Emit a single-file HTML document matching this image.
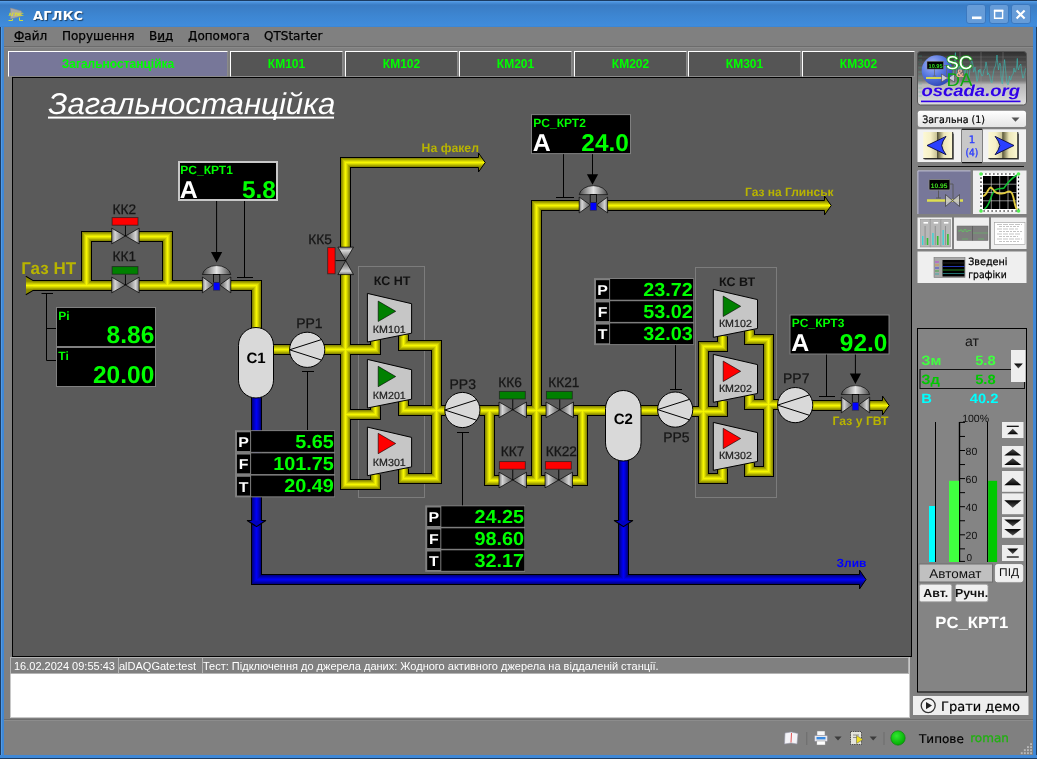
<!DOCTYPE html>
<html lang="uk"><head><meta charset="utf-8"><title>АГЛКС</title>
<style>
html,body{margin:0;padding:0;}
body{width:1037px;height:759px;position:relative;overflow:hidden;background:#808080;font-family:"Liberation Sans",sans-serif;}
.abs{position:absolute;box-sizing:border-box;}
#ttl,#menubar,.tab,.cell{will-change:transform;}
.dj{font-family:"DejaVu Sans","Liberation Sans",sans-serif;}
#titlebar{left:0;top:0;width:1037px;height:27px;background:linear-gradient(#1c3c62 0,#1c3c62 1px,#5ca2ea 1px,#4a90da 2.5px,#3a7cc4 5px,#3d86d2 16px,#408cdc 26px,#3a82d0 27px);}
#bl{left:0;top:27px;width:4px;height:732px;background:linear-gradient(90deg,#1c3c62 0,#1c3c62 1px,#5ca2ea 1px,#4a94e0 2px,#3f88d6 2px);}
#br{left:1033px;top:27px;width:4px;height:732px;background:linear-gradient(90deg,#3f88d6 0,#3f88d6 3px,#1c3c62 3px);}
#bb{left:0;top:755px;width:1037px;height:4px;background:linear-gradient(#3f88d6 0,#3f88d6 3px,#1c3c62 3px);}
#ttl{left:32.5px;top:7.5px;font:bold 13px "DejaVu Sans",sans-serif;color:#fff;text-shadow:1px 1px 1px rgba(0,0,0,.55);letter-spacing:.2px;}
.wb{top:4px;width:20px;height:20px;border-radius:3px;background:#669cd8;border:1px solid #3b78bf;}
#menubar{left:4px;top:27px;width:1029px;height:19px;background:#808080;}
#menubar span{position:absolute;top:2px;font:12px "DejaVu Sans",sans-serif;color:#000;-webkit-text-stroke:0.25px #000;}
#msep{left:4px;top:46px;width:1029px;height:2px;background:linear-gradient(#6c6c6c 0,#6c6c6c 1px,#8a8a8a 1px);}
.tab{top:51px;height:26px;background:#555;border:1px solid;border-color:#fff #8a8a8a #8a8a8a #fff;color:#00ff00;font:bold 12px "Liberation Sans",sans-serif;text-align:center;line-height:24px;}
.tab.act{background:#777799;}
#canvas{left:12px;top:77px;width:900px;height:580px;background:#5a5a5a;border:1px solid #000;}
#stbl{left:10px;top:657px;width:900px;height:61px;background:#fff;border:1px solid #c8c8c8;border-top:none;}
#strow{left:10px;top:657px;width:899px;height:17px;background:#808080;}
.cell{top:657px;height:17px;border:1px solid #b4b4b4;color:#fff;font:11px "Liberation Sans",sans-serif;line-height:16px;white-space:nowrap;overflow:hidden;}
#sline{left:4px;top:719px;width:1029px;height:2px;background:linear-gradient(#6e6e6e 0,#6e6e6e 1px,#8c8c8c 1px);}
.pbtn{background:#eeeeee;border:1px solid;border-color:#fff #b8b8b8 #b8b8b8 #fff;}
</style></head><body>
<div class="abs" id="titlebar"></div>
<div class="abs" id="bl"></div><div class="abs" id="br"></div><div class="abs" id="bb"></div>
<div class="abs" id="ttl">АГЛКС</div>
<div class="abs wb" style="left:966px"></div><div class="abs wb" style="left:989px"></div><div class="abs wb" style="left:1011px"></div>
<div class="abs" id="menubar"><span style="left:10px"><u>Ф</u>айл</span><span style="left:58px">Порушення</span><span style="left:145px">В<u>и</u>д</span><span style="left:184px"><u>Д</u>опомога</span><span style="left:260px">QTStarter</span></div>
<div class="abs" id="msep"></div>
<div class="abs tab act" style="left:8px;width:220px">Загальностанційка</div>
<div class="abs tab" style="left:230px;width:113px">КМ101</div>
<div class="abs tab" style="left:345px;width:113px">КМ102</div>
<div class="abs tab" style="left:459px;width:113px">КМ201</div>
<div class="abs tab" style="left:574px;width:113px">КМ202</div>
<div class="abs tab" style="left:688px;width:113px">КМ301</div>
<div class="abs tab" style="left:802px;width:113px">КМ302</div>
<div class="abs" id="canvas"></div>
<div class="abs" id="stbl"></div><div class="abs" id="strow"></div>
<div class="abs cell" style="left:10px;width:109px;padding-left:3px">16.02.2024 09:55:43</div>
<div class="abs cell" style="left:118px;width:85px;padding-left:0px">alDAQGate:test</div>
<div class="abs cell" style="left:202px;width:707px;padding-left:0px">Тест: Підключення до джерела даних: Жодного активного джерела на віддаленій станції.</div>
<div class="abs" id="sline"></div>
<!--RIGHT-->
<svg width="1037" height="759" viewBox="0 0 1037 759" style="position:absolute;left:0;top:0;will-change:transform" font-family="Liberation Sans, sans-serif" text-rendering="geometricPrecision"><defs>
<linearGradient id="gvl" x1="0" x2="1" y1="0" y2="0"><stop offset="0" stop-color="#747474"/><stop offset="0.25" stop-color="#d6d6d6"/><stop offset="0.65" stop-color="#8e8e8e"/><stop offset="1" stop-color="#5a5a5a"/></linearGradient>
<linearGradient id="gvr" x1="0" x2="1" y1="0" y2="0"><stop offset="0" stop-color="#5a5a5a"/><stop offset="0.35" stop-color="#8e8e8e"/><stop offset="0.75" stop-color="#d6d6d6"/><stop offset="1" stop-color="#747474"/></linearGradient>
<linearGradient id="gvt" x1="0" x2="0" y1="0" y2="1"><stop offset="0" stop-color="#747474"/><stop offset="0.25" stop-color="#d6d6d6"/><stop offset="0.65" stop-color="#8e8e8e"/><stop offset="1" stop-color="#5a5a5a"/></linearGradient>
<linearGradient id="gvb" x1="0" x2="0" y1="0" y2="1"><stop offset="0" stop-color="#5a5a5a"/><stop offset="0.35" stop-color="#8e8e8e"/><stop offset="0.75" stop-color="#d6d6d6"/><stop offset="1" stop-color="#747474"/></linearGradient>
<linearGradient id="gdome" x1="0" x2="1" y1="0" y2="0"><stop offset="0" stop-color="#4a4a4a"/><stop offset="0.5" stop-color="#e4e4e4"/><stop offset="1" stop-color="#4a4a4a"/></linearGradient>
<linearGradient id="gyh" x1="0" x2="0" y1="0" y2="1"><stop offset="0" stop-color="#8c8c00"/><stop offset="0.27" stop-color="#8c8c00"/><stop offset="0.5" stop-color="#f6f600"/><stop offset="0.73" stop-color="#8c8c00"/><stop offset="1" stop-color="#8c8c00"/></linearGradient>
<linearGradient id="gbh" x1="0" x2="0" y1="0" y2="1"><stop offset="0" stop-color="#00008c"/><stop offset="0.27" stop-color="#00008c"/><stop offset="0.5" stop-color="#0000f6"/><stop offset="0.73" stop-color="#00008c"/><stop offset="1" stop-color="#00008c"/></linearGradient>
</defs>
<rect x="358.5" y="266.5" width="66" height="231" fill="none" stroke="#7c7c7c" stroke-width="1"/>
<rect x="695.5" y="267.5" width="81" height="230" fill="none" stroke="#7c7c7c" stroke-width="1"/>
<path d="M256.5,396 L256.5,579.5 L860.5,579.5 M623.5,459 L623.5,579.5" fill="none" stroke="#000000" stroke-width="11" stroke-linejoin="miter" stroke-linecap="butt"/>
<path d="M256.5,396 L256.5,579.5 L860.5,579.5 M623.5,459 L623.5,579.5" fill="none" stroke="#00008c" stroke-width="9" stroke-linejoin="miter" stroke-linecap="butt"/>
<path d="M256.5,396 L256.5,579.5 L860.5,579.5 M623.5,459 L623.5,579.5" fill="none" stroke="#0000a8" stroke-width="7" stroke-linejoin="miter" stroke-linecap="butt"/>
<path d="M256.5,396 L256.5,579.5 L860.5,579.5 M623.5,459 L623.5,579.5" fill="none" stroke="#0000c6" stroke-width="5" stroke-linejoin="miter" stroke-linecap="butt"/>
<path d="M256.5,396 L256.5,579.5 L860.5,579.5 M623.5,459 L623.5,579.5" fill="none" stroke="#0000e2" stroke-width="3" stroke-linejoin="miter" stroke-linecap="butt"/>
<path d="M256.5,396 L256.5,579.5 L860.5,579.5 M623.5,459 L623.5,579.5" fill="none" stroke="#0000f6" stroke-width="1" stroke-linejoin="miter" stroke-linecap="butt"/>
<polygon points="859.5,570 866,579.5 859.5,589" fill="url(#gbh)"/>
<path d="M859.5,574.5 V570 L866,579.5 L859.5,589 V584.5" fill="none" stroke="#000" stroke-width="1"/>
<polygon points="247.2,520.4 265.8,520.4 256.5,526.4" fill="#0000c4"/>
<rect x="252" y="519" width="9" height="8" fill="none"/>
<polygon points="614.2,520.4 632.8,520.4 623.5,526.4" fill="#0000c4"/>
<rect x="619" y="519" width="9" height="8" fill="none"/>
<path d="M246.9,520.5 H251.5 M261.5,520.5 H266.1 M247.2,520.5 L256.5,526.6 L265.8,520.5" fill="none" stroke="#000" stroke-width="1.1"/>
<path d="M613.9,520.5 H618.5 M628.5,520.5 H633.1 M614.2,520.5 L623.5,526.6 L632.8,520.5" fill="none" stroke="#000" stroke-width="1.1"/>
<path d="M33,285.5 L112,285.5 M139,285.5 L203.5,285.5 M230.5,285.5 L256.5,285.5 L256.5,329 M86.5,285.5 L86.5,236.5 L112,236.5 M139,236.5 L167.5,236.5 L167.5,285.5 M272,349.5 L290,349.5 M324,349.5 L345.5,349.5 M479.5,162.5 L345.5,162.5 L345.5,247.2 M345.5,274.6 L345.5,484.5 L375.5,484.5 L375.5,474.5 M345.5,349.5 L375.5,349.5 L375.5,339.8 M345.5,414.5 L375.5,414.5 L375.5,406.3 M403.5,334.6 L403.5,345.5 L436.5,345.5 L436.5,478.5 L403.5,478.5 L403.5,468.5 M403.5,400.3 L403.5,410.5 L445,410.5 M479.5,410.5 L499.5,410.5 M526.5,410.5 L546.5,410.5 M573.5,410.5 L606,410.5 M489.5,410.5 L489.5,480.5 L499.5,480.5 M526.5,480.5 L545.5,480.5 M572.5,480.5 L582.5,480.5 L582.5,410.5 M536.5,480.5 L536.5,205.5 L579.5,205.5 M607.5,205.5 L825.5,205.5 M640,410.5 L658,410.5 M692,411.5 L703.5,411.5 M722.5,336.3 L722.5,346.5 L703.5,346.5 L703.5,478.5 L722.5,478.5 L722.5,468.5 M703.5,411.5 L722.5,411.5 L722.5,401.3 M749.5,330.2 L749.5,339.5 L768.5,339.5 L768.5,471.5 L749.5,471.5 L749.5,462.8 M749.5,395.2 L749.5,404.5 L778,404.5 M812,405.5 L842.5,405.5 M869.5,405.5 L883.5,405.5" fill="none" stroke="#000000" stroke-width="11" stroke-linejoin="miter" stroke-linecap="butt"/>
<path d="M33,285.5 L112,285.5 M139,285.5 L203.5,285.5 M230.5,285.5 L256.5,285.5 L256.5,329 M86.5,285.5 L86.5,236.5 L112,236.5 M139,236.5 L167.5,236.5 L167.5,285.5 M272,349.5 L290,349.5 M324,349.5 L345.5,349.5 M479.5,162.5 L345.5,162.5 L345.5,247.2 M345.5,274.6 L345.5,484.5 L375.5,484.5 L375.5,474.5 M345.5,349.5 L375.5,349.5 L375.5,339.8 M345.5,414.5 L375.5,414.5 L375.5,406.3 M403.5,334.6 L403.5,345.5 L436.5,345.5 L436.5,478.5 L403.5,478.5 L403.5,468.5 M403.5,400.3 L403.5,410.5 L445,410.5 M479.5,410.5 L499.5,410.5 M526.5,410.5 L546.5,410.5 M573.5,410.5 L606,410.5 M489.5,410.5 L489.5,480.5 L499.5,480.5 M526.5,480.5 L545.5,480.5 M572.5,480.5 L582.5,480.5 L582.5,410.5 M536.5,480.5 L536.5,205.5 L579.5,205.5 M607.5,205.5 L825.5,205.5 M640,410.5 L658,410.5 M692,411.5 L703.5,411.5 M722.5,336.3 L722.5,346.5 L703.5,346.5 L703.5,478.5 L722.5,478.5 L722.5,468.5 M703.5,411.5 L722.5,411.5 L722.5,401.3 M749.5,330.2 L749.5,339.5 L768.5,339.5 L768.5,471.5 L749.5,471.5 L749.5,462.8 M749.5,395.2 L749.5,404.5 L778,404.5 M812,405.5 L842.5,405.5 M869.5,405.5 L883.5,405.5" fill="none" stroke="#8c8c00" stroke-width="9" stroke-linejoin="miter" stroke-linecap="butt"/>
<path d="M33,285.5 L112,285.5 M139,285.5 L203.5,285.5 M230.5,285.5 L256.5,285.5 L256.5,329 M86.5,285.5 L86.5,236.5 L112,236.5 M139,236.5 L167.5,236.5 L167.5,285.5 M272,349.5 L290,349.5 M324,349.5 L345.5,349.5 M479.5,162.5 L345.5,162.5 L345.5,247.2 M345.5,274.6 L345.5,484.5 L375.5,484.5 L375.5,474.5 M345.5,349.5 L375.5,349.5 L375.5,339.8 M345.5,414.5 L375.5,414.5 L375.5,406.3 M403.5,334.6 L403.5,345.5 L436.5,345.5 L436.5,478.5 L403.5,478.5 L403.5,468.5 M403.5,400.3 L403.5,410.5 L445,410.5 M479.5,410.5 L499.5,410.5 M526.5,410.5 L546.5,410.5 M573.5,410.5 L606,410.5 M489.5,410.5 L489.5,480.5 L499.5,480.5 M526.5,480.5 L545.5,480.5 M572.5,480.5 L582.5,480.5 L582.5,410.5 M536.5,480.5 L536.5,205.5 L579.5,205.5 M607.5,205.5 L825.5,205.5 M640,410.5 L658,410.5 M692,411.5 L703.5,411.5 M722.5,336.3 L722.5,346.5 L703.5,346.5 L703.5,478.5 L722.5,478.5 L722.5,468.5 M703.5,411.5 L722.5,411.5 L722.5,401.3 M749.5,330.2 L749.5,339.5 L768.5,339.5 L768.5,471.5 L749.5,471.5 L749.5,462.8 M749.5,395.2 L749.5,404.5 L778,404.5 M812,405.5 L842.5,405.5 M869.5,405.5 L883.5,405.5" fill="none" stroke="#a8a800" stroke-width="7" stroke-linejoin="miter" stroke-linecap="butt"/>
<path d="M33,285.5 L112,285.5 M139,285.5 L203.5,285.5 M230.5,285.5 L256.5,285.5 L256.5,329 M86.5,285.5 L86.5,236.5 L112,236.5 M139,236.5 L167.5,236.5 L167.5,285.5 M272,349.5 L290,349.5 M324,349.5 L345.5,349.5 M479.5,162.5 L345.5,162.5 L345.5,247.2 M345.5,274.6 L345.5,484.5 L375.5,484.5 L375.5,474.5 M345.5,349.5 L375.5,349.5 L375.5,339.8 M345.5,414.5 L375.5,414.5 L375.5,406.3 M403.5,334.6 L403.5,345.5 L436.5,345.5 L436.5,478.5 L403.5,478.5 L403.5,468.5 M403.5,400.3 L403.5,410.5 L445,410.5 M479.5,410.5 L499.5,410.5 M526.5,410.5 L546.5,410.5 M573.5,410.5 L606,410.5 M489.5,410.5 L489.5,480.5 L499.5,480.5 M526.5,480.5 L545.5,480.5 M572.5,480.5 L582.5,480.5 L582.5,410.5 M536.5,480.5 L536.5,205.5 L579.5,205.5 M607.5,205.5 L825.5,205.5 M640,410.5 L658,410.5 M692,411.5 L703.5,411.5 M722.5,336.3 L722.5,346.5 L703.5,346.5 L703.5,478.5 L722.5,478.5 L722.5,468.5 M703.5,411.5 L722.5,411.5 L722.5,401.3 M749.5,330.2 L749.5,339.5 L768.5,339.5 L768.5,471.5 L749.5,471.5 L749.5,462.8 M749.5,395.2 L749.5,404.5 L778,404.5 M812,405.5 L842.5,405.5 M869.5,405.5 L883.5,405.5" fill="none" stroke="#c6c600" stroke-width="5" stroke-linejoin="miter" stroke-linecap="butt"/>
<path d="M33,285.5 L112,285.5 M139,285.5 L203.5,285.5 M230.5,285.5 L256.5,285.5 L256.5,329 M86.5,285.5 L86.5,236.5 L112,236.5 M139,236.5 L167.5,236.5 L167.5,285.5 M272,349.5 L290,349.5 M324,349.5 L345.5,349.5 M479.5,162.5 L345.5,162.5 L345.5,247.2 M345.5,274.6 L345.5,484.5 L375.5,484.5 L375.5,474.5 M345.5,349.5 L375.5,349.5 L375.5,339.8 M345.5,414.5 L375.5,414.5 L375.5,406.3 M403.5,334.6 L403.5,345.5 L436.5,345.5 L436.5,478.5 L403.5,478.5 L403.5,468.5 M403.5,400.3 L403.5,410.5 L445,410.5 M479.5,410.5 L499.5,410.5 M526.5,410.5 L546.5,410.5 M573.5,410.5 L606,410.5 M489.5,410.5 L489.5,480.5 L499.5,480.5 M526.5,480.5 L545.5,480.5 M572.5,480.5 L582.5,480.5 L582.5,410.5 M536.5,480.5 L536.5,205.5 L579.5,205.5 M607.5,205.5 L825.5,205.5 M640,410.5 L658,410.5 M692,411.5 L703.5,411.5 M722.5,336.3 L722.5,346.5 L703.5,346.5 L703.5,478.5 L722.5,478.5 L722.5,468.5 M703.5,411.5 L722.5,411.5 L722.5,401.3 M749.5,330.2 L749.5,339.5 L768.5,339.5 L768.5,471.5 L749.5,471.5 L749.5,462.8 M749.5,395.2 L749.5,404.5 L778,404.5 M812,405.5 L842.5,405.5 M869.5,405.5 L883.5,405.5" fill="none" stroke="#e2e200" stroke-width="3" stroke-linejoin="miter" stroke-linecap="butt"/>
<path d="M33,285.5 L112,285.5 M139,285.5 L203.5,285.5 M230.5,285.5 L256.5,285.5 L256.5,329 M86.5,285.5 L86.5,236.5 L112,236.5 M139,236.5 L167.5,236.5 L167.5,285.5 M272,349.5 L290,349.5 M324,349.5 L345.5,349.5 M479.5,162.5 L345.5,162.5 L345.5,247.2 M345.5,274.6 L345.5,484.5 L375.5,484.5 L375.5,474.5 M345.5,349.5 L375.5,349.5 L375.5,339.8 M345.5,414.5 L375.5,414.5 L375.5,406.3 M403.5,334.6 L403.5,345.5 L436.5,345.5 L436.5,478.5 L403.5,478.5 L403.5,468.5 M403.5,400.3 L403.5,410.5 L445,410.5 M479.5,410.5 L499.5,410.5 M526.5,410.5 L546.5,410.5 M573.5,410.5 L606,410.5 M489.5,410.5 L489.5,480.5 L499.5,480.5 M526.5,480.5 L545.5,480.5 M572.5,480.5 L582.5,480.5 L582.5,410.5 M536.5,480.5 L536.5,205.5 L579.5,205.5 M607.5,205.5 L825.5,205.5 M640,410.5 L658,410.5 M692,411.5 L703.5,411.5 M722.5,336.3 L722.5,346.5 L703.5,346.5 L703.5,478.5 L722.5,478.5 L722.5,468.5 M703.5,411.5 L722.5,411.5 L722.5,401.3 M749.5,330.2 L749.5,339.5 L768.5,339.5 L768.5,471.5 L749.5,471.5 L749.5,462.8 M749.5,395.2 L749.5,404.5 L778,404.5 M812,405.5 L842.5,405.5 M869.5,405.5 L883.5,405.5" fill="none" stroke="#f6f600" stroke-width="1" stroke-linejoin="miter" stroke-linecap="butt"/>
<polygon points="478.5,153 485.2,162.5 478.5,172" fill="url(#gyh)"/>
<path d="M478.5,157.5 V153 L485.2,162.5 L478.5,172 V167.5" fill="none" stroke="#000" stroke-width="1"/>
<polygon points="824.5,196 831.2,205.5 824.5,215" fill="url(#gyh)"/>
<path d="M824.5,200.5 V196 L831.2,205.5 L824.5,215 V210.5" fill="none" stroke="#000" stroke-width="1"/>
<polygon points="882.5,396 889.2,405.5 882.5,415" fill="url(#gyh)"/>
<path d="M882.5,400.5 V396 L889.2,405.5 L882.5,415 V410.5" fill="none" stroke="#000" stroke-width="1"/>
<polygon points="26,276 33.2,281 33.2,290 26,295" fill="url(#gyh)"/>
<path d="M25.8,276.2 L33.2,280.6 M25.8,294.8 L33.2,290.4" fill="none" stroke="#000" stroke-width="1.1"/>
<rect x="238.5" y="327.5" width="35" height="70.5" rx="17.5" ry="17.85" fill="#d9d9d9" stroke="#000" stroke-width="1"/>
<text x="256" y="362.7" font-size="15" fill="#000" font-weight="bold" text-anchor="middle"  >С1</text>
<rect x="605.5" y="390.5" width="35.5" height="70.5" rx="17.75" ry="18.105" fill="#d9d9d9" stroke="#000" stroke-width="1"/>
<text x="623.25" y="423.7" font-size="15" fill="#000" font-weight="bold" text-anchor="middle"  >С2</text>
<circle cx="307.2" cy="349.8" r="17.6" fill="#d9d9d9" stroke="#000" stroke-width="1"/>
<path d="M321.7,339.5 L289.6,349.8 L321.7,360.1" fill="none" stroke="#000" stroke-width="1"/>
<text x="296.2" y="328" font-size="14" fill="#161616" font-weight="normal" text-anchor="start"  stroke="#161616" stroke-width="0.25">PP1</text>
<circle cx="462.4" cy="410" r="17.6" fill="#d9d9d9" stroke="#000" stroke-width="1"/>
<path d="M476.9,399.7 L444.8,410 L476.9,420.3" fill="none" stroke="#000" stroke-width="1"/>
<text x="449.5" y="388.8" font-size="14" fill="#161616" font-weight="normal" text-anchor="start"  stroke="#161616" stroke-width="0.25">PP3</text>
<circle cx="675.2" cy="409.6" r="17.6" fill="#d9d9d9" stroke="#000" stroke-width="1"/>
<path d="M689.7,399.3 L657.6,409.6 L689.7,419.9" fill="none" stroke="#000" stroke-width="1"/>
<text x="663.2" y="442.3" font-size="14" fill="#161616" font-weight="normal" text-anchor="start"  stroke="#161616" stroke-width="0.25">PP5</text>
<circle cx="795.2" cy="405.1" r="17.6" fill="#d9d9d9" stroke="#000" stroke-width="1"/>
<path d="M809.7,394.8 L777.6,405.1 L809.7,415.4" fill="none" stroke="#000" stroke-width="1"/>
<text x="783" y="383" font-size="14" fill="#161616" font-weight="normal" text-anchor="start"  stroke="#161616" stroke-width="0.25">PP7</text>
<line x1="307.5" y1="371.5" x2="307.5" y2="430" stroke="#000" stroke-width="1"/>
<line x1="302" y1="371.5" x2="314" y2="371.5" stroke="#000" stroke-width="1"/>
<line x1="462.5" y1="432.5" x2="462.5" y2="506" stroke="#000" stroke-width="1"/>
<line x1="457" y1="432.5" x2="469" y2="432.5" stroke="#000" stroke-width="1"/>
<line x1="675.5" y1="344" x2="675.5" y2="389.5" stroke="#000" stroke-width="1"/>
<line x1="670" y1="389.5" x2="682" y2="389.5" stroke="#000" stroke-width="1"/>
<line x1="826.5" y1="354" x2="826.5" y2="396.5" stroke="#000" stroke-width="1"/>
<line x1="819" y1="396.5" x2="835" y2="396.5" stroke="#000" stroke-width="1"/>
<line x1="563.5" y1="154" x2="563.5" y2="197.5" stroke="#000" stroke-width="1"/>
<line x1="556" y1="197.5" x2="574" y2="197.5" stroke="#000" stroke-width="1"/>
<line x1="244.5" y1="201" x2="244.5" y2="277.5" stroke="#000" stroke-width="1"/>
<line x1="237" y1="277.5" x2="253" y2="277.5" stroke="#000" stroke-width="1"/>
<line x1="46.5" y1="293.5" x2="46.5" y2="360.5" stroke="#000" stroke-width="1"/>
<line x1="41.5" y1="293.5" x2="53" y2="293.5" stroke="#000" stroke-width="1"/>
<line x1="46.5" y1="328.5" x2="57" y2="328.5" stroke="#000" stroke-width="1"/>
<line x1="46.5" y1="360.5" x2="57" y2="360.5" stroke="#000" stroke-width="1"/>
<polygon points="111.7,228.2 125.45,236 111.7,243.8" fill="url(#gvl)" stroke="#000" stroke-width="0.7"/>
<polygon points="139.2,228.2 125.45,236 139.2,243.8" fill="url(#gvr)" stroke="#000" stroke-width="0.7"/>
<line x1="125.45" y1="236" x2="125.45" y2="225.5" stroke="#000" stroke-width="0.9"/>
<rect x="112.1" y="217.6" width="25.9" height="7.6" fill="#ff0000" stroke="#1a1a1a" stroke-opacity="0.7" stroke-width="0.9"/>
<text x="112.6" y="213.7" font-size="13.7" fill="#161616" font-weight="normal" text-anchor="start"  stroke="#161616" stroke-width="0.25">КК2</text>
<polygon points="111.7,277.2 125.45,285 111.7,292.8" fill="url(#gvl)" stroke="#000" stroke-width="0.7"/>
<polygon points="139.2,277.2 125.45,285 139.2,292.8" fill="url(#gvr)" stroke="#000" stroke-width="0.7"/>
<line x1="125.45" y1="285" x2="125.45" y2="274.5" stroke="#000" stroke-width="0.9"/>
<rect x="112.1" y="266.6" width="25.9" height="7.6" fill="#008000" stroke="#1a1a1a" stroke-opacity="0.7" stroke-width="0.9"/>
<text x="112.6" y="261.4" font-size="13.7" fill="#161616" font-weight="normal" text-anchor="start"  stroke="#161616" stroke-width="0.25">КК1</text>
<polygon points="499,402 512.75,409.8 499,417.6" fill="url(#gvl)" stroke="#000" stroke-width="0.7"/>
<polygon points="526.5,402 512.75,409.8 526.5,417.6" fill="url(#gvr)" stroke="#000" stroke-width="0.7"/>
<line x1="512.75" y1="409.8" x2="512.75" y2="399.3" stroke="#000" stroke-width="0.9"/>
<rect x="499.4" y="391.4" width="25.9" height="7.6" fill="#008000" stroke="#1a1a1a" stroke-opacity="0.7" stroke-width="0.9"/>
<text x="498.2" y="386.7" font-size="13.7" fill="#161616" font-weight="normal" text-anchor="start"  stroke="#161616" stroke-width="0.25">КК6</text>
<polygon points="546,402 559.75,409.8 546,417.6" fill="url(#gvl)" stroke="#000" stroke-width="0.7"/>
<polygon points="573.5,402 559.75,409.8 573.5,417.6" fill="url(#gvr)" stroke="#000" stroke-width="0.7"/>
<line x1="559.75" y1="409.8" x2="559.75" y2="399.3" stroke="#000" stroke-width="0.9"/>
<rect x="546.4" y="391.4" width="25.9" height="7.6" fill="#008000" stroke="#1a1a1a" stroke-opacity="0.7" stroke-width="0.9"/>
<text x="548.2" y="386.7" font-size="13.7" fill="#161616" font-weight="normal" text-anchor="start"  stroke="#161616" stroke-width="0.25">КК21</text>
<polygon points="499,472.2 512.75,480 499,487.8" fill="url(#gvl)" stroke="#000" stroke-width="0.7"/>
<polygon points="526.5,472.2 512.75,480 526.5,487.8" fill="url(#gvr)" stroke="#000" stroke-width="0.7"/>
<line x1="512.75" y1="480" x2="512.75" y2="469.5" stroke="#000" stroke-width="0.9"/>
<rect x="499.4" y="461.6" width="25.9" height="7.6" fill="#ff0000" stroke="#1a1a1a" stroke-opacity="0.7" stroke-width="0.9"/>
<text x="500.8" y="455.7" font-size="13.7" fill="#161616" font-weight="normal" text-anchor="start"  stroke="#161616" stroke-width="0.25">КК7</text>
<polygon points="545,472.2 558.75,480 545,487.8" fill="url(#gvl)" stroke="#000" stroke-width="0.7"/>
<polygon points="572.5,472.2 558.75,480 572.5,487.8" fill="url(#gvr)" stroke="#000" stroke-width="0.7"/>
<line x1="558.75" y1="480" x2="558.75" y2="469.5" stroke="#000" stroke-width="0.9"/>
<rect x="545.4" y="461.6" width="25.9" height="7.6" fill="#ff0000" stroke="#1a1a1a" stroke-opacity="0.7" stroke-width="0.9"/>
<text x="545.8" y="455.7" font-size="13.7" fill="#161616" font-weight="normal" text-anchor="start"  stroke="#161616" stroke-width="0.25">КК22</text>
<polygon points="337.9,247.1 345.7,260.6 353.5,247.1" fill="url(#gvt)" stroke="#000" stroke-width="0.7"/>
<polygon points="337.9,274.6 345.7,260.6 353.5,274.6" fill="url(#gvb)" stroke="#000" stroke-width="0.7"/>
<line x1="345.7" y1="260.6" x2="335.4" y2="260.6" stroke="#000" stroke-width="0.9"/>
<rect x="327.7" y="247.6" width="7.4" height="26.2" fill="#ff0000" stroke="#1a1a1a" stroke-opacity="0.7" stroke-width="0.9"/>
<text x="308.2" y="243.8" font-size="13.7" fill="#161616" font-weight="normal" text-anchor="start"  stroke="#161616" stroke-width="0.25">КК5</text>
<polygon points="202.4,277 213.6,284.9 202.4,292.8" fill="url(#gvl)" stroke="#000" stroke-width="0.7"/>
<polygon points="230.8,277 219.6,284.9 230.8,292.8" fill="url(#gvr)" stroke="#000" stroke-width="0.7"/>
<path d="M202.4,274.5 A14.3,10.1 0 0 1 230.8,274.5 Z" fill="url(#gdome)" stroke="#000" stroke-width="0.6"/>
<rect x="213.4" y="274.5" width="6.4" height="8" fill="#5a5a5a" stroke="#000" stroke-width="0.8"/>
<rect x="213.3" y="282.3" width="6.6" height="7.9" fill="#0000ff" stroke="#333" stroke-width="0.6"/>
<line x1="216.6" y1="201" x2="216.6" y2="256.6" stroke="#000" stroke-width="1"/>
<polygon points="211,252.1 222.2,252.1 216.6,262.6" fill="#000"/>
<polygon points="579.2,197.1 590.4,205 579.2,212.9" fill="url(#gvl)" stroke="#000" stroke-width="0.7"/>
<polygon points="607.6,197.1 596.4,205 607.6,212.9" fill="url(#gvr)" stroke="#000" stroke-width="0.7"/>
<path d="M579.2,194.6 A14.3,10.1 0 0 1 607.6,194.6 Z" fill="url(#gdome)" stroke="#000" stroke-width="0.6"/>
<rect x="590.2" y="194.6" width="6.4" height="8" fill="#5a5a5a" stroke="#000" stroke-width="0.8"/>
<rect x="590.1" y="202.4" width="6.6" height="7.9" fill="#0000ff" stroke="#333" stroke-width="0.6"/>
<line x1="592.5" y1="154" x2="592.5" y2="178.7" stroke="#000" stroke-width="1"/>
<polygon points="586.9,174.2 598.1,174.2 592.5,184.7" fill="#000"/>
<polygon points="841.3,397 852.5,404.9 841.3,412.8" fill="url(#gvl)" stroke="#000" stroke-width="0.7"/>
<polygon points="869.7,397 858.5,404.9 869.7,412.8" fill="url(#gvr)" stroke="#000" stroke-width="0.7"/>
<path d="M841.3,394.5 A14.3,10.1 0 0 1 869.7,394.5 Z" fill="url(#gdome)" stroke="#000" stroke-width="0.6"/>
<rect x="852.3" y="394.5" width="6.4" height="8" fill="#5a5a5a" stroke="#000" stroke-width="0.8"/>
<rect x="852.2" y="402.3" width="6.6" height="7.9" fill="#0000ff" stroke="#333" stroke-width="0.6"/>
<line x1="855.4" y1="354" x2="855.4" y2="377.9" stroke="#000" stroke-width="1"/>
<polygon points="849.8,373.4 861,373.4 855.4,383.9" fill="#000"/>
<polygon points="367.4,293.4 411.6,303.7 411.6,333.2 367.4,342" fill="#c6c6c6" stroke="#000" stroke-width="1"/>
<polygon points="378.2,301.1 395.7,311.3 378.2,321.5" fill="#008000" stroke="#000" stroke-width="0.6"/>
<text x="389.3" y="333.4" font-size="10.4" fill="#202020" font-weight="normal" text-anchor="middle"  textLength="33" lengthAdjust="spacingAndGlyphs" stroke="#202020" stroke-width="0.2">КМ101</text>
<polygon points="367.4,359.4 411.6,369.7 411.6,399.2 367.4,408" fill="#c6c6c6" stroke="#000" stroke-width="1"/>
<polygon points="378.2,366.3 395.7,376.5 378.2,386.7" fill="#008000" stroke="#000" stroke-width="0.6"/>
<text x="389.3" y="398.6" font-size="10.4" fill="#202020" font-weight="normal" text-anchor="middle"  textLength="33" lengthAdjust="spacingAndGlyphs" stroke="#202020" stroke-width="0.2">КМ201</text>
<polygon points="367.4,427.1 411.6,437.4 411.6,466.9 367.4,475.7" fill="#c6c6c6" stroke="#000" stroke-width="1"/>
<polygon points="378.2,433.3 395.7,443.5 378.2,453.7" fill="#ff0000" stroke="#000" stroke-width="0.6"/>
<text x="389.3" y="465.8" font-size="10.4" fill="#202020" font-weight="normal" text-anchor="middle"  textLength="33" lengthAdjust="spacingAndGlyphs" stroke="#202020" stroke-width="0.2">КМ301</text>
<polygon points="713.3,289.4 757.5,299.6 757.5,328.5 713.3,337.3" fill="#c6c6c6" stroke="#000" stroke-width="1"/>
<polygon points="723.2,296.1 740.7,306.3 723.2,316.5" fill="#008000" stroke="#000" stroke-width="0.6"/>
<text x="735.4" y="327.4" font-size="10.4" fill="#202020" font-weight="normal" text-anchor="middle"  textLength="33" lengthAdjust="spacingAndGlyphs" stroke="#202020" stroke-width="0.2">КМ102</text>
<polygon points="713.3,354.4 757.5,364.6 757.5,393.5 713.3,402.3" fill="#c6c6c6" stroke="#000" stroke-width="1"/>
<polygon points="723.2,361.1 740.7,371.3 723.2,381.5" fill="#ff0000" stroke="#000" stroke-width="0.6"/>
<text x="735.4" y="392.4" font-size="10.4" fill="#202020" font-weight="normal" text-anchor="middle"  textLength="33" lengthAdjust="spacingAndGlyphs" stroke="#202020" stroke-width="0.2">КМ202</text>
<polygon points="713.3,422.4 757.5,432.6 757.5,461.5 713.3,470.3" fill="#c6c6c6" stroke="#000" stroke-width="1"/>
<polygon points="723.2,428.3 740.7,438.5 723.2,448.7" fill="#ff0000" stroke="#000" stroke-width="0.6"/>
<text x="735.4" y="459.4" font-size="10.4" fill="#202020" font-weight="normal" text-anchor="middle"  textLength="33" lengthAdjust="spacingAndGlyphs" stroke="#202020" stroke-width="0.2">КМ302</text>
<text x="392" y="284.8" font-size="12.5" fill="#111" font-weight="bold" text-anchor="middle"  >КС НТ</text>
<text x="737" y="285.6" font-size="12.5" fill="#111" font-weight="bold" text-anchor="middle"  >КС ВТ</text>
<rect x="235" y="430.2" width="99.8" height="22.65" fill="#808080"/>
<rect x="251.1" y="431.1" width="83.1" height="20.75" fill="#000"/>
<rect x="237" y="432.3" width="13.1" height="18.75" fill="#000"/>
<text transform="translate(243.6,447) scale(1.12,1)" font-size="14.2" fill="#fff" font-weight="bold" text-anchor="middle">P</text>
<text transform="translate(333.9,447.8) scale(1.05,1)" font-size="18.9" fill="#00ff00" font-weight="bold" text-anchor="end">5.65</text>
<rect x="235" y="452.45" width="99.8" height="22.65" fill="#808080"/>
<rect x="251.1" y="453.35" width="83.1" height="20.75" fill="#000"/>
<rect x="237" y="454.55" width="13.1" height="18.75" fill="#000"/>
<text transform="translate(243.6,469.25) scale(1.12,1)" font-size="14.2" fill="#fff" font-weight="bold" text-anchor="middle">F</text>
<text transform="translate(333.9,470.05) scale(1.05,1)" font-size="18.9" fill="#00ff00" font-weight="bold" text-anchor="end">101.75</text>
<rect x="235" y="474.7" width="99.8" height="22.65" fill="#808080"/>
<rect x="251.1" y="475.6" width="83.1" height="20.75" fill="#000"/>
<rect x="237" y="476.8" width="13.1" height="18.75" fill="#000"/>
<text transform="translate(243.6,491.5) scale(1.12,1)" font-size="14.2" fill="#fff" font-weight="bold" text-anchor="middle">T</text>
<text transform="translate(333.9,492.3) scale(1.05,1)" font-size="18.9" fill="#00ff00" font-weight="bold" text-anchor="end">20.49</text>
<rect x="425.2" y="505.4" width="99.8" height="22.4" fill="#808080"/>
<rect x="441.3" y="506.3" width="83.1" height="20.5" fill="#000"/>
<rect x="427.2" y="507.5" width="13.1" height="18.5" fill="#000"/>
<text transform="translate(433.8,522.2) scale(1.12,1)" font-size="14.2" fill="#fff" font-weight="bold" text-anchor="middle">P</text>
<text transform="translate(524.1,523) scale(1.05,1)" font-size="18.9" fill="#00ff00" font-weight="bold" text-anchor="end">24.25</text>
<rect x="425.2" y="527.4" width="99.8" height="22.4" fill="#808080"/>
<rect x="441.3" y="528.3" width="83.1" height="20.5" fill="#000"/>
<rect x="427.2" y="529.5" width="13.1" height="18.5" fill="#000"/>
<text transform="translate(433.8,544.2) scale(1.12,1)" font-size="14.2" fill="#fff" font-weight="bold" text-anchor="middle">F</text>
<text transform="translate(524.1,545) scale(1.05,1)" font-size="18.9" fill="#00ff00" font-weight="bold" text-anchor="end">98.60</text>
<rect x="425.2" y="549.4" width="99.8" height="22.4" fill="#808080"/>
<rect x="441.3" y="550.3" width="83.1" height="20.5" fill="#000"/>
<rect x="427.2" y="551.5" width="13.1" height="18.5" fill="#000"/>
<text transform="translate(433.8,566.2) scale(1.12,1)" font-size="14.2" fill="#fff" font-weight="bold" text-anchor="middle">T</text>
<text transform="translate(524.1,567) scale(1.05,1)" font-size="18.9" fill="#00ff00" font-weight="bold" text-anchor="end">32.17</text>
<rect x="594" y="278.1" width="99.8" height="22.6" fill="#808080"/>
<rect x="610.1" y="279" width="83.1" height="20.7" fill="#000"/>
<rect x="596" y="280.2" width="13.1" height="18.7" fill="#000"/>
<text transform="translate(602.6,294.9) scale(1.12,1)" font-size="14.2" fill="#fff" font-weight="bold" text-anchor="middle">P</text>
<text transform="translate(692.9,295.7) scale(1.05,1)" font-size="18.9" fill="#00ff00" font-weight="bold" text-anchor="end">23.72</text>
<rect x="594" y="300.3" width="99.8" height="22.6" fill="#808080"/>
<rect x="610.1" y="301.2" width="83.1" height="20.7" fill="#000"/>
<rect x="596" y="302.4" width="13.1" height="18.7" fill="#000"/>
<text transform="translate(602.6,317.1) scale(1.12,1)" font-size="14.2" fill="#fff" font-weight="bold" text-anchor="middle">F</text>
<text transform="translate(692.9,317.9) scale(1.05,1)" font-size="18.9" fill="#00ff00" font-weight="bold" text-anchor="end">53.02</text>
<rect x="594" y="322.5" width="99.8" height="22.6" fill="#808080"/>
<rect x="610.1" y="323.4" width="83.1" height="20.7" fill="#000"/>
<rect x="596" y="324.6" width="13.1" height="18.7" fill="#000"/>
<text transform="translate(602.6,339.3) scale(1.12,1)" font-size="14.2" fill="#fff" font-weight="bold" text-anchor="middle">T</text>
<text transform="translate(692.9,340.1) scale(1.05,1)" font-size="18.9" fill="#00ff00" font-weight="bold" text-anchor="end">32.03</text>
<rect x="179" y="162" width="98" height="38" fill="#000" stroke="#c8c8c8" stroke-width="2"/>
<text x="180.3" y="173.5" font-size="12" fill="#00ff00" font-weight="bold" text-anchor="start"  >PC_КРТ1</text>
<text x="179.8" y="198" font-size="24.4" fill="#fff" font-weight="bold" text-anchor="start"  textLength="18" lengthAdjust="spacingAndGlyphs">A</text>
<text x="275.8" y="198" font-size="24.4" fill="#00ff00" font-weight="bold" text-anchor="end"  >5.8</text>
<rect x="531.5" y="114.6" width="99" height="39" fill="#000" stroke="#808080" stroke-width="1"/>
<text x="533.3" y="126.6" font-size="12" fill="#00ff00" font-weight="bold" text-anchor="start"  >PC_КРТ2</text>
<text x="532.8" y="151.4" font-size="24.4" fill="#fff" font-weight="bold" text-anchor="start"  textLength="18" lengthAdjust="spacingAndGlyphs">A</text>
<text x="628.8" y="151.4" font-size="24.4" fill="#00ff00" font-weight="bold" text-anchor="end"  >24.0</text>
<rect x="790" y="315" width="99" height="39" fill="#000" stroke="#808080" stroke-width="1"/>
<text x="791.8" y="327" font-size="12" fill="#00ff00" font-weight="bold" text-anchor="start"  >PC_КРТ3</text>
<text x="791.3" y="350.5" font-size="24.4" fill="#fff" font-weight="bold" text-anchor="start"  textLength="18" lengthAdjust="spacingAndGlyphs">A</text>
<text x="887.3" y="350.5" font-size="24.4" fill="#00ff00" font-weight="bold" text-anchor="end"  >92.0</text>
<rect x="56.5" y="307.5" width="99" height="39" fill="#000" stroke="#808080" stroke-width="1"/>
<text x="58.3" y="319.7" font-size="12" fill="#00ff00" font-weight="bold" text-anchor="start"  >Pi</text>
<text x="154.3" y="343.1" font-size="24.5" fill="#00ff00" font-weight="bold" text-anchor="end"  >8.86</text>
<rect x="56.5" y="347.5" width="99" height="39" fill="#000" stroke="#808080" stroke-width="1"/>
<text x="58.3" y="359.7" font-size="12" fill="#00ff00" font-weight="bold" text-anchor="start"  >Ti</text>
<text x="154.3" y="383.1" font-size="24.5" fill="#00ff00" font-weight="bold" text-anchor="end"  >20.00</text>
<text x="21.2" y="274" font-size="17" fill="#b8b400" font-weight="bold" text-anchor="start"  >Газ НТ</text>
<text x="421.6" y="151.7" font-size="12.25" fill="#b8b400" font-weight="bold" text-anchor="start"  >На факел</text>
<text x="745" y="195.5" font-size="12" fill="#b8b400" font-weight="bold" text-anchor="start"  >Газ на Глинськ</text>
<text x="832.6" y="424.6" font-size="12.2" fill="#b8b400" font-weight="bold" text-anchor="start"  >Газ у ГВТ</text>
<text x="836.5" y="566.6" font-size="12" fill="#0000ff" font-weight="bold" text-anchor="start"  >Злив</text>
<text x="48.3" y="114.2" font-size="30" fill="#fff" font-weight="normal" text-anchor="start" font-style="italic" textLength="287" lengthAdjust="spacingAndGlyphs">Загальностанційка</text>
<rect x="48" y="116.6" width="286" height="2" fill="#fff"/>
<defs>
<linearGradient id="lgbg" x1="0" x2="0" y1="0" y2="1"><stop offset="0" stop-color="#2e2e2e"/><stop offset="0.55" stop-color="#7c7c7c"/><stop offset="0.62" stop-color="#b8b8b8"/><stop offset="1" stop-color="#dedede"/></linearGradient>
<radialGradient id="sph" cx="0.35" cy="0.3" r="0.8"><stop offset="0" stop-color="#a8b8f8"/><stop offset="0.5" stop-color="#5878e0"/><stop offset="1" stop-color="#2840b0"/></radialGradient>
<linearGradient id="book" x1="0" x2="1" y1="0" y2="0"><stop offset="0" stop-color="#fcf8d4"/><stop offset="0.25" stop-color="#f6f0c6"/><stop offset="0.47" stop-color="#c8c294"/><stop offset="0.49" stop-color="#1a1a10"/><stop offset="0.51" stop-color="#6e6a48"/><stop offset="0.7" stop-color="#ece6b8"/><stop offset="1" stop-color="#fcf8d4"/></linearGradient>
<linearGradient id="cmb" x1="0" x2="0" y1="0" y2="1"><stop offset="0" stop-color="#ffffff"/><stop offset="1" stop-color="#e4e4e4"/></linearGradient>
<radialGradient id="gled" cx="0.4" cy="0.35" r="0.7"><stop offset="0" stop-color="#30e830"/><stop offset="1" stop-color="#00a800"/></radialGradient>
<linearGradient id="tri" x1="0" x2="0" y1="0" y2="1"><stop offset="0" stop-color="#000"/><stop offset="1" stop-color="#555"/></linearGradient>
<linearGradient id="trid" x1="0" x2="0" y1="0" y2="1"><stop offset="0" stop-color="#555"/><stop offset="1" stop-color="#000"/></linearGradient>
</defs>
<polygon points="10.5,8 21.5,11 21.5,16 10.5,19" fill="#a9a9a9" stroke="#8a8a8a" stroke-width="0.5"/>
<text x="8.6" y="16.2" font-size="4.6" fill="#e6e61e" font-weight="bold" text-anchor="start"   >АГЛКС</text>
<path d="M8.5,20.5 H12.5 V19 M23,20.5 H19.5 V17.5" fill="none" stroke="#d8e632" stroke-width="0.9"/>
<rect x="972" y="16.5" width="9.5" height="2.6" fill="#fff"/>
<path d="M994.6,10.8 H1002.6 V18.2 H994.6 Z" fill="none" stroke="#fff" stroke-width="1.4"/><rect x="993.9" y="9.6" width="9.4" height="2" fill="#fff"/>
<path d="M1016.6,10.6 L1024.6,18.4 M1024.6,10.6 L1016.6,18.4" fill="none" stroke="#fff" stroke-width="2.1"/>
<rect x="917.5" y="51.5" width="109" height="53.5" rx="3" fill="url(#lgbg)" stroke="#555" stroke-width="1"/>
<line x1="960" y1="52" x2="960" y2="86" stroke="#9a9a9a" stroke-width="0.6" opacity="0.6"/>
<line x1="981" y1="52" x2="981" y2="86" stroke="#9a9a9a" stroke-width="0.6" opacity="0.6"/>
<line x1="1003" y1="52" x2="1003" y2="86" stroke="#9a9a9a" stroke-width="0.6" opacity="0.6"/>
<line x1="918" y1="57" x2="1026" y2="57" stroke="#9a9a9a" stroke-width="0.5" opacity="0.45"/>
<line x1="918" y1="62" x2="1026" y2="62" stroke="#9a9a9a" stroke-width="0.5" opacity="0.45"/>
<line x1="918" y1="67" x2="1026" y2="67" stroke="#9a9a9a" stroke-width="0.5" opacity="0.45"/>
<line x1="918" y1="72" x2="1026" y2="72" stroke="#9a9a9a" stroke-width="0.5" opacity="0.45"/>
<line x1="918" y1="77" x2="1026" y2="77" stroke="#9a9a9a" stroke-width="0.5" opacity="0.45"/>
<line x1="918" y1="82" x2="1026" y2="82" stroke="#9a9a9a" stroke-width="0.5" opacity="0.45"/>
<polyline points="948.0,74.0 949.6,73.5 951.0,70.0 952.2,75.7 953.0,76.0 954.3,66.8 955.4,52.6 955.9,65.1 957.0,78.0 958.3,72.9 959.0,66.0 960.2,66.7 961.0,72.0 962.0,67.0 963.0,65.0 964.0,69.9 965.0,74.0 965.7,69.8 967.0,69.0 967.9,76.0 969.0,78.0 969.9,70.0 970.5,66.0 971.4,61.2 972.0,60.7 972.8,64.1 973.5,72.0 974.0,71.7 975.0,67.0 975.8,72.6 977.0,81.6 978.0,78.0 978.5,70.0 979.1,72.3 980.0,69.0 981.0,73.6 982.0,76.0 982.8,75.6 984.0,70.0 985.1,68.7 986.0,61.9 987.0,67.2 987.5,75.0 988.2,72.8 989.0,74.6 989.5,74.7 990.5,80.0 991.1,82.0 992.0,82.7 992.5,78.4 993.5,72.0 994.4,67.9 995.5,66.0 996.4,60.4 997.0,55.0 997.6,62.4 998.5,70.0 999.4,63.8 1000.0,63.0 1000.8,66.6 1001.0,76.0 1001.8,82.1 1002.3,84.0 1002.6,78.7 1003.5,70.0 1004.0,65.3 1004.6,59.6 1005.0,64.1 1006.0,74.0 1006.8,82.2 1008.0,85.0 1008.6,82.0 1009.5,76.0 1010.5,80.2 1011.0,79.0 1011.8,75.9 1012.7,74.6 1013.4,73.0 1014.0,68.0 1014.5,71.5 1015.5,72.0 1016.6,67.4 1017.3,58.4 1017.6,66.9 1018.5,70.0 1019.4,66.0 1020.8,64.0 1021.5,71.0 1022.0,73.0 1022.7,78.0 1023.5,78.0 1024.3,73.9 1025.0,72.0 1025.4,68.6 1026.0,69.0" fill="none" stroke="#38bcb4" stroke-width="0.75" opacity="0.8"/>
<line x1="918.5" y1="56" x2="922" y2="56" stroke="#30b090" stroke-width="0.6" opacity="0.5"/>
<line x1="918.5" y1="60" x2="922" y2="60" stroke="#30b090" stroke-width="0.6" opacity="0.5"/>
<line x1="918.5" y1="64" x2="922" y2="64" stroke="#30b090" stroke-width="0.6" opacity="0.5"/>
<line x1="918.5" y1="68" x2="922" y2="68" stroke="#30b090" stroke-width="0.6" opacity="0.5"/>
<line x1="918.5" y1="72" x2="922" y2="72" stroke="#30b090" stroke-width="0.6" opacity="0.5"/>
<line x1="918.5" y1="76" x2="922" y2="76" stroke="#30b090" stroke-width="0.6" opacity="0.5"/>
<line x1="918.5" y1="80" x2="922" y2="80" stroke="#30b090" stroke-width="0.6" opacity="0.5"/>
<line x1="918.5" y1="84" x2="922" y2="84" stroke="#30b090" stroke-width="0.6" opacity="0.5"/>
<line x1="918.5" y1="88" x2="922" y2="88" stroke="#30b090" stroke-width="0.6" opacity="0.5"/>
<line x1="918.5" y1="92" x2="922" y2="92" stroke="#30b090" stroke-width="0.6" opacity="0.5"/>
<line x1="918.5" y1="96" x2="922" y2="96" stroke="#30b090" stroke-width="0.6" opacity="0.5"/>
<circle cx="937" cy="70.6" r="15.3" fill="url(#sph)"/>
<rect x="927" y="61.3" width="16.5" height="7.8" fill="#000" stroke="#888" stroke-width="0.5"/>
<text x="928.6" y="67.6" font-size="5.6" fill="#30e020" font-weight="bold" text-anchor="start"   >10.95</text>
<path d="M934.5,69 V76 M932.8,76 H936.2 M943.5,65.5 H946.5 V77" fill="none" stroke="#667" stroke-width="0.8"/>
<line x1="926" y1="78" x2="955" y2="78" stroke="#e2e24a" stroke-width="1.8"/>
<polygon points="941.5,74 948,78 941.5,82" fill="#c8c8d8" stroke="#445" stroke-width="0.6"/><polygon points="954.5,74 948,78 954.5,82" fill="#c8c8d8" stroke="#445" stroke-width="0.6"/>
<text x="946" y="69.4" font-size="18.5" fill="#fff" font-weight="normal" text-anchor="start"   stroke="#18a818" stroke-width="1.5" paint-order="stroke" textLength="26.5" lengthAdjust="spacingAndGlyphs">SC</text>
<text x="946.6" y="86.2" font-size="18.5" fill="#10a810" font-weight="normal" text-anchor="start"   textLength="26" lengthAdjust="spacingAndGlyphs">DA</text>
<text x="956" y="76.5" font-size="11" fill="#f4b098" font-weight="bold" text-anchor="start"   >&amp;</text>
<text x="922.3" y="96.8" font-size="16" fill="#c8c8e8" font-weight="bold" text-anchor="start" font-style="italic"  textLength="98.5" lengthAdjust="spacingAndGlyphs" opacity="0.7">oscada.org</text>
<text x="921.5" y="96" font-size="16" fill="#3000e8" font-weight="bold" text-anchor="start" font-style="italic"  textLength="98.5" lengthAdjust="spacingAndGlyphs">oscada.org</text>
<rect x="921" y="100.6" width="99.5" height="1.6" fill="#3000e8"/>
<rect x="917.8" y="110.8" width="108.2" height="16.3" rx="2.5" fill="url(#cmb)"/>
<text x="922.2" y="122.9" font-size="10.3" fill="#000" font-weight="normal" text-anchor="start"  font-family="DejaVu Sans, Liberation Sans, sans-serif" textLength="62.8" lengthAdjust="spacingAndGlyphs" stroke="#000" stroke-width="0.2">Загальна (1)</text>
<polygon points="1011.5,117.5 1019.5,117.5 1015.5,121.8" fill="#555"/>
<rect x="917.5" y="129.3" width="43.5" height="32.7" fill="#f2f2f2"/><rect x="983" y="129.3" width="43" height="32.7" fill="#f2f2f2"/>
<rect x="962" y="129" width="20" height="34" fill="#c8c8c8"/><line x1="962" y1="129.3" x2="982" y2="129.3" stroke="#111" stroke-width="1.2"/><line x1="962" y1="162.6" x2="982" y2="162.6" stroke="#111" stroke-width="1.2"/>
<text x="971.9" y="142.8" font-size="10.2" fill="#2a3cff" font-weight="normal" text-anchor="middle"  font-family="DejaVu Sans, Liberation Sans, sans-serif" stroke="#2a3cff" stroke-width="0.35">1</text>
<text x="972" y="156" font-size="10.2" fill="#2a3cff" font-weight="normal" text-anchor="middle"  font-family="DejaVu Sans, Liberation Sans, sans-serif" textLength="12.8" lengthAdjust="spacingAndGlyphs" stroke="#2a3cff" stroke-width="0.35">(4)</text>
<rect x="924.5" y="133.6" width="29.4" height="26" fill="#111" opacity="0.6"/>
<rect x="923.3" y="132" width="29.4" height="26.6" fill="url(#book)"/>
<path d="M923.3,158.6 H952.7 V132" fill="none" stroke="#111" stroke-width="0.9"/>
<path d="M927,145.5 L946,136.4 Q942.5,141 941.6,145.5 Q942.5,150 946,154.7 Z" fill="#2a40ff" stroke="#0a0a40" stroke-width="0.9" stroke-linejoin="round"/>
<rect x="989.6" y="133.6" width="29.4" height="26" fill="#111" opacity="0.6"/>
<rect x="988.4" y="132" width="29.4" height="26.6" fill="url(#book)"/>
<path d="M988.4,158.6 H1017.8 V132" fill="none" stroke="#111" stroke-width="0.9"/>
<path d="M1014,145.5 L995.1,136.4 Q998.8,141 999.8,145.5 Q998.8,150 995.1,154.7 Z" fill="#2a40ff" stroke="#0a0a40" stroke-width="0.9" stroke-linejoin="round"/>
<line x1="918" y1="166.5" x2="1024" y2="166.5" stroke="#111" stroke-width="1"/>
<rect x="917.5" y="170.5" width="53" height="43.5" fill="#777799"/><path d="M917.9,214 V170.9 H970.5" fill="none" stroke="#d8d8e4" stroke-width="0.8"/>
<rect x="973" y="170.5" width="53.5" height="43.5" fill="#efefef"/>
<rect x="929" y="179.5" width="21" height="10.5" rx="1" fill="#000" stroke="#8a8a8a" stroke-width="0.9"/>
<text x="930.8" y="187.6" font-size="6.6" fill="#40e020" font-weight="bold" text-anchor="start"   >10.95</text>
<path d="M938.5,190.5 V198 M936,198 H941 M950,184 H953 V199" fill="none" stroke="#555" stroke-width="0.9"/>
<line x1="927" y1="200.5" x2="963" y2="200.5" stroke="#dede50" stroke-width="2.4"/>
<polygon points="945.5,194.5 952.5,200.5 945.5,206.5" fill="#c8c8c8" fill-opacity="0.85" stroke="#444" stroke-width="0.8"/><polygon points="959.5,194.5 952.5,200.5 959.5,206.5" fill="#c8c8c8" fill-opacity="0.85" stroke="#444" stroke-width="0.8"/>
<rect x="980.3" y="173.3" width="38.9" height="38.4" fill="#fff"/><rect x="981" y="174" width="37.5" height="37" fill="none" stroke="#111" stroke-width="1.2" stroke-dasharray="1.7,2.3"/>
<rect x="983" y="176" width="33.5" height="33" fill="#000"/>
<line x1="991.3" y1="176" x2="991.3" y2="209" stroke="#ddd" stroke-width="0.6"/>
<line x1="999.7" y1="176" x2="999.7" y2="209" stroke="#ddd" stroke-width="0.6"/>
<line x1="1008" y1="176" x2="1008" y2="209" stroke="#ddd" stroke-width="0.6"/>
<line x1="983" y1="184.2" x2="1016.5" y2="184.2" stroke="#ddd" stroke-width="0.6"/>
<line x1="983" y1="192.5" x2="1016.5" y2="192.5" stroke="#ddd" stroke-width="0.6"/>
<line x1="983" y1="200.8" x2="1016.5" y2="200.8" stroke="#ddd" stroke-width="0.6"/>
<path d="M984.5,209 C990,206 991,193 995,190 C999,188 1002,189 1004,188 C1008,182 1012,178 1017,175" fill="none" stroke="#10c030" stroke-width="1.5"/>
<path d="M983,196 C987,195.5 988,188 990.5,187.5 C993,187.5 993.5,192 997,193 C1001,194 1005,193.5 1007,192 C1010,190.5 1012,192 1013,196 C1014.5,201 1015,207 1017,209.5" fill="none" stroke="#e2cc40" stroke-width="1.9"/>
<circle cx="981" cy="174" r="1.8" fill="#50f050"/>
<circle cx="1018.5" cy="174" r="1.8" fill="#50f050"/>
<circle cx="981" cy="211" r="1.8" fill="#50f050"/>
<circle cx="1018.5" cy="211" r="1.8" fill="#50f050"/>
<rect x="917.5" y="217.5" width="34.5" height="31.5" fill="#efefef"/>
<rect x="954" y="217.5" width="35" height="31.5" fill="#efefef"/>
<rect x="991" y="217.5" width="35.5" height="31.5" fill="#efefef"/>
<rect x="920.5" y="219.5" width="9.6" height="27.5" fill="#b8b8b8" stroke="#888" stroke-width="0.5"/>
<rect x="923.5" y="222" width="4.5" height="1.6" fill="#fff"/>
<rect x="922.1" y="236" width="1.3" height="9" fill="#30d8d8"/>
<rect x="926.7" y="238" width="1.6" height="7" fill="#30c030"/>
<line x1="925.1" y1="226" x2="925.1" y2="245" stroke="#555" stroke-width="0.4"/>
<rect x="930.7" y="219.5" width="9.6" height="27.5" fill="#b8b8b8" stroke="#888" stroke-width="0.5"/>
<rect x="933.7" y="222" width="4.5" height="1.6" fill="#fff"/>
<rect x="932.3" y="233" width="1.3" height="12" fill="#30d8d8"/>
<rect x="936.9" y="236" width="1.6" height="9" fill="#30c030"/>
<line x1="935.3" y1="226" x2="935.3" y2="245" stroke="#555" stroke-width="0.4"/>
<rect x="940.9" y="219.5" width="9.6" height="27.5" fill="#b8b8b8" stroke="#888" stroke-width="0.5"/>
<rect x="943.9" y="222" width="4.5" height="1.6" fill="#fff"/>
<rect x="942.5" y="230" width="1.3" height="15" fill="#30d8d8"/>
<rect x="947.1" y="234" width="1.6" height="11" fill="#30c030"/>
<line x1="945.5" y1="226" x2="945.5" y2="245" stroke="#555" stroke-width="0.4"/>
<rect x="957" y="226" width="31" height="14.5" fill="#7e7e7e" stroke="#666" stroke-width="0.5"/><line x1="972.5" y1="226" x2="972.5" y2="240.5" stroke="#555" stroke-width="0.7"/>
<path d="M958,231 h2 v-1 h2 v1.5 h2 v-2 h2 v2 h2 v-1 h3" fill="none" stroke="#60c860" stroke-width="0.7"/><line x1="973" y1="233" x2="988" y2="233" stroke="#60c860" stroke-width="0.5"/><line x1="962" y1="239" x2="968" y2="239" stroke="#60c860" stroke-width="0.6"/><line x1="978" y1="239" x2="984" y2="239" stroke="#60c860" stroke-width="0.6"/>
<rect x="994.5" y="222.5" width="30.5" height="22" fill="#fff" stroke="#999" stroke-width="0.6"/>
<line x1="997" y1="224.5" x2="1022" y2="224.5" stroke="#888" stroke-width="0.5" stroke-dasharray="5,1"/>
<line x1="999" y1="226.5" x2="1020" y2="226.5" stroke="#888" stroke-width="0.5" stroke-dasharray="3,1,2,1"/>
<line x1="997" y1="229" x2="1018" y2="229" stroke="#888" stroke-width="0.5" stroke-dasharray="5,1"/>
<line x1="999" y1="231.5" x2="1022" y2="231.5" stroke="#888" stroke-width="0.5" stroke-dasharray="3,1,2,1"/>
<line x1="997" y1="234" x2="1020" y2="234" stroke="#888" stroke-width="0.5" stroke-dasharray="5,1"/>
<line x1="999" y1="236.5" x2="1018" y2="236.5" stroke="#888" stroke-width="0.5" stroke-dasharray="3,1,2,1"/>
<line x1="997" y1="239" x2="1022" y2="239" stroke="#888" stroke-width="0.5" stroke-dasharray="5,1"/>
<line x1="999" y1="241.5" x2="1020" y2="241.5" stroke="#888" stroke-width="0.5" stroke-dasharray="3,1,2,1"/>
<rect x="917.5" y="251.5" width="109" height="31.5" fill="#efefef"/>
<rect x="934" y="257.5" width="31" height="20" fill="#a8a8a8" stroke="#777" stroke-width="0.6"/><rect x="942.5" y="260" width="22" height="16.5" fill="#000"/>
<line x1="942.5" y1="263" x2="964.5" y2="263" stroke="#333" stroke-width="0.7"/>
<line x1="942.5" y1="266.5" x2="964.5" y2="266.5" stroke="#3050ff" stroke-width="0.7"/>
<line x1="942.5" y1="270" x2="964.5" y2="270" stroke="#30c030" stroke-width="0.7"/>
<line x1="942.5" y1="273.5" x2="964.5" y2="273.5" stroke="#30a0a0" stroke-width="0.7"/>
<line x1="935" y1="262" x2="939" y2="262" stroke="#c0f" stroke-width="0.6"/>
<line x1="935" y1="265" x2="939" y2="265" stroke="#f80" stroke-width="0.6"/>
<line x1="935" y1="268" x2="939" y2="268" stroke="#00f" stroke-width="0.6"/>
<line x1="935" y1="271" x2="939" y2="271" stroke="#0a0" stroke-width="0.6"/>
<line x1="935" y1="274" x2="939" y2="274" stroke="#0aa" stroke-width="0.6"/>
<text x="968.2" y="264.8" font-size="10" fill="#000" font-weight="normal" text-anchor="start"  font-family="DejaVu Sans, Liberation Sans, sans-serif" textLength="39.3" lengthAdjust="spacingAndGlyphs" stroke="#000" stroke-width="0.25">Зведені</text>
<text x="968.2" y="277.8" font-size="10" fill="#000" font-weight="normal" text-anchor="start"  font-family="DejaVu Sans, Liberation Sans, sans-serif" textLength="38.5" lengthAdjust="spacingAndGlyphs" stroke="#000" stroke-width="0.25">графіки</text>
<rect x="917.5" y="328.5" width="109" height="363.5" fill="#848484" stroke="#000" stroke-width="1"/>
<text x="972" y="345.8" font-size="14" fill="#111" font-weight="normal" text-anchor="middle"   >ат</text>
<text transform="translate(921.2,364.6) scale(1.09,1)" font-size="13.5" fill="#40ff40" font-weight="bold">Зм</text>
<text transform="translate(995.6,364.6) scale(1.09,1)" font-size="13.5" fill="#40ff40" font-weight="bold" text-anchor="end">5.8</text>
<rect x="920" y="369.5" width="104.5" height="19" fill="none" stroke="#111" stroke-width="1"/>
<text transform="translate(921.2,383.5) scale(1.09,1)" font-size="13.5" fill="#00c800" font-weight="bold">Зд</text>
<text transform="translate(995.6,383.5) scale(1.09,1)" font-size="13.5" fill="#00c800" font-weight="bold" text-anchor="end">5.8</text>
<text transform="translate(921.2,402.7) scale(1.09,1)" font-size="13.5" fill="#00ffff" font-weight="bold">В</text>
<text transform="translate(998.4,402.7) scale(1.09,1)" font-size="13.5" fill="#00ffff" font-weight="bold" text-anchor="end">40.2</text>
<rect x="1011" y="350" width="14.5" height="32" fill="#eeeeee"/><polygon points="1014,363.5 1022.8,363.5 1018.4,368.5" fill="url(#tri)"/>
<line x1="935.5" y1="422" x2="935.5" y2="562" stroke="#000" stroke-width="1"/>
<line x1="959.5" y1="422" x2="959.5" y2="562" stroke="#000" stroke-width="1.4"/>
<line x1="987.5" y1="422" x2="987.5" y2="562" stroke="#000" stroke-width="1"/>
<line x1="959.5" y1="422.4" x2="965" y2="422.4" stroke="#000" stroke-width="1"/>
<line x1="959.5" y1="436.45" x2="965" y2="436.45" stroke="#000" stroke-width="1"/>
<line x1="959.5" y1="450.5" x2="965" y2="450.5" stroke="#000" stroke-width="1"/>
<line x1="959.5" y1="464.55" x2="965" y2="464.55" stroke="#000" stroke-width="1"/>
<line x1="959.5" y1="478.6" x2="965" y2="478.6" stroke="#000" stroke-width="1"/>
<line x1="959.5" y1="492.65" x2="965" y2="492.65" stroke="#000" stroke-width="1"/>
<line x1="959.5" y1="506.7" x2="965" y2="506.7" stroke="#000" stroke-width="1"/>
<line x1="959.5" y1="520.75" x2="965" y2="520.75" stroke="#000" stroke-width="1"/>
<line x1="959.5" y1="534.8" x2="965" y2="534.8" stroke="#000" stroke-width="1"/>
<line x1="959.5" y1="548.85" x2="965" y2="548.85" stroke="#000" stroke-width="1"/>
<line x1="959.5" y1="561.4" x2="965" y2="561.4" stroke="#000" stroke-width="1"/>
<text x="962.2" y="421.8" font-size="10.5" fill="#111" font-weight="normal" text-anchor="start"   >100%</text>
<text x="965.6" y="454.6" font-size="10.5" fill="#111" font-weight="normal" text-anchor="start"   >80</text>
<text x="965.6" y="482.7" font-size="10.5" fill="#111" font-weight="normal" text-anchor="start"   >60</text>
<text x="965.6" y="510.8" font-size="10.5" fill="#111" font-weight="normal" text-anchor="start"   >40</text>
<text x="965.6" y="538.9" font-size="10.5" fill="#111" font-weight="normal" text-anchor="start"   >20</text>
<text x="966.5" y="561.2" font-size="10" fill="#111" font-weight="normal" text-anchor="start"   >0</text>
<rect x="929" y="506" width="6" height="56" fill="#00ffff"/>
<rect x="949" y="480.8" width="10" height="81.2" fill="#40ff40"/>
<rect x="988.2" y="480.8" width="8.9" height="81.2" fill="#00c800"/>
<rect x="1002" y="422" width="21.5" height="16" fill="#eeeeee"/>
<line x1="1006.75" y1="426.3" x2="1018.75" y2="426.3" stroke="#000" stroke-width="1.2"/>
<polygon points="1007.25,434.2 1018.25,434.2 1012.75,428.8" fill="url(#trid)"/>
<rect x="1002" y="446" width="21.5" height="21.5" fill="#eeeeee"/>
<polygon points="1004.25,455.6 1021.25,455.6 1012.75,449" fill="url(#trid)"/>
<polygon points="1004.25,464.9 1021.25,464.9 1012.75,458.3" fill="url(#trid)"/>
<rect x="1002" y="471" width="21.5" height="20.8" fill="#eeeeee"/>
<polygon points="1004.25,485.3 1021.25,485.3 1012.75,477.7" fill="url(#trid)"/>
<rect x="1002" y="493.4" width="21.5" height="20.8" fill="#eeeeee"/>
<polygon points="1004.25,500.2 1021.25,500.2 1012.75,507.8" fill="url(#tri)"/>
<rect x="1002" y="517" width="21.5" height="20.8" fill="#eeeeee"/>
<polygon points="1004.25,519.6 1021.25,519.6 1012.75,526.2" fill="url(#tri)"/>
<polygon points="1004.25,528.9 1021.25,528.9 1012.75,535.5" fill="url(#tri)"/>
<rect x="1002" y="545" width="21.5" height="16" fill="#eeeeee"/>
<polygon points="1007.25,548.6 1018.25,548.6 1012.75,554" fill="url(#tri)"/>
<line x1="1006.75" y1="557" x2="1018.75" y2="557" stroke="#000" stroke-width="1.2"/>
<rect x="919" y="564" width="73.5" height="18" fill="#c0c0c0" stroke="#6e6e6e" stroke-width="1"/>
<text transform="translate(955.3,577.5) scale(1.07,1)" font-size="12.6" fill="#111" text-anchor="middle">Автомат</text>
<rect x="995.4" y="564.6" width="27.4" height="17.2" rx="2" fill="#f0f0f0" stroke="#fdfdfd" stroke-width="0.8"/>
<text transform="translate(1009.1,576.3) scale(1.07,1)" font-size="11.2" fill="#111" text-anchor="middle">ПІД</text>
<rect x="919.4" y="584.3" width="32.4" height="17.5" rx="2" fill="#f0f0f0" stroke="#a0a0a0" stroke-width="0.8"/>
<rect x="955.4" y="584.3" width="32.6" height="17.5" rx="2" fill="#f0f0f0" stroke="#a0a0a0" stroke-width="0.8"/>
<text transform="translate(935.7,596.6) scale(1.05,1)" font-size="11.8" fill="#111" font-weight="bold" text-anchor="middle">Авт.</text>
<text transform="translate(971.6,596.6) scale(1.05,1)" font-size="11.8" fill="#111" font-weight="bold" text-anchor="middle">Ручн.</text>
<text transform="translate(971.8,628) scale(1.03,1)" font-size="16.2" fill="#fff" font-weight="bold" text-anchor="middle">PC_КРТ1</text>
<rect x="913" y="696" width="115.5" height="19" fill="#eeeeee"/>
<circle cx="928.2" cy="705.6" r="7" fill="#f4f4f4" stroke="#333" stroke-width="1.3"/><polygon points="926,702 926,709.2 932,705.6" fill="#222"/>
<text x="941" y="710.6" font-size="13" fill="#000" font-weight="normal" text-anchor="start"  font-family="DejaVu Sans, Liberation Sans, sans-serif" stroke="#000" stroke-width="0.2">Грати демо</text>
<g><polygon points="785,733 791,732 798,733.5 797,744 791,743 784.5,744" fill="#f4f4f8" stroke="#99a" stroke-width="0.6"/><line x1="791.5" y1="733" x2="791" y2="742.5" stroke="#e04040" stroke-width="0.9"/></g>
<line x1="806.8" y1="732" x2="806.8" y2="745" stroke="#6c6c6c" stroke-width="1"/>
<g><rect x="817" y="731" width="8" height="5" fill="#f8f8f8" stroke="#888" stroke-width="0.5"/><rect x="814.5" y="735.5" width="13" height="6" rx="1" fill="#e8e8ec" stroke="#889" stroke-width="0.6"/><rect x="816.5" y="737" width="9" height="2.4" fill="#3a8ae0"/><rect x="816.8" y="741" width="8.4" height="4" fill="#fff" stroke="#888" stroke-width="0.5"/></g>
<polygon points="834.4,736.4 841.6,736.4 838,740.4" fill="#3c3c3c"/>
<g><rect x="850.5" y="731.5" width="11" height="13" fill="#e4e4dc" stroke="#333" stroke-width="0.8" stroke-dasharray="1.5,0.8"/><line x1="853" y1="735" x2="859" y2="735" stroke="#555" stroke-width="0.6"/><line x1="853" y1="737.5" x2="859" y2="737.5" stroke="#555" stroke-width="0.6"/><polygon points="856.5,735.5 863,739.5 856.5,743.5" fill="#f0e020" stroke="#554" stroke-width="0.5"/></g>
<polygon points="869.6,736.4 876.8,736.4 873.2,740.4" fill="#3c3c3c"/>
<line x1="884" y1="732" x2="884" y2="745" stroke="#6c6c6c" stroke-width="1"/>
<circle cx="898" cy="738" r="7.2" fill="url(#gled)" stroke="#0a7a0a" stroke-width="0.6"/>
<text x="919" y="743" font-size="12" fill="#000" font-weight="normal" text-anchor="start"  font-family="DejaVu Sans, Liberation Sans, sans-serif" stroke="#000" stroke-width="0.2">Типове</text>
<text x="970.2" y="742.3" font-size="12" fill="#20b010" font-weight="normal" text-anchor="start"  font-family="DejaVu Sans, Liberation Sans, sans-serif" stroke="#20b010" stroke-width="0.3">roman</text>
<rect x="1030.1" y="743.2" width="1.9" height="1.9" fill="#b8b8b8"/>
<rect x="1027" y="746.2" width="1.9" height="1.9" fill="#b8b8b8"/>
<rect x="1030.1" y="746.2" width="1.9" height="1.9" fill="#b8b8b8"/>
<rect x="1023.9" y="749.2" width="1.9" height="1.9" fill="#b8b8b8"/>
<rect x="1027" y="749.2" width="1.9" height="1.9" fill="#b8b8b8"/>
<rect x="1030.1" y="749.2" width="1.9" height="1.9" fill="#b8b8b8"/>
<rect x="1020.8" y="752.2" width="1.9" height="1.9" fill="#b8b8b8"/>
<rect x="1023.9" y="752.2" width="1.9" height="1.9" fill="#b8b8b8"/>
<rect x="1027" y="752.2" width="1.9" height="1.9" fill="#b8b8b8"/>
<rect x="1030.1" y="752.2" width="1.9" height="1.9" fill="#b8b8b8"/></svg></body></html>
